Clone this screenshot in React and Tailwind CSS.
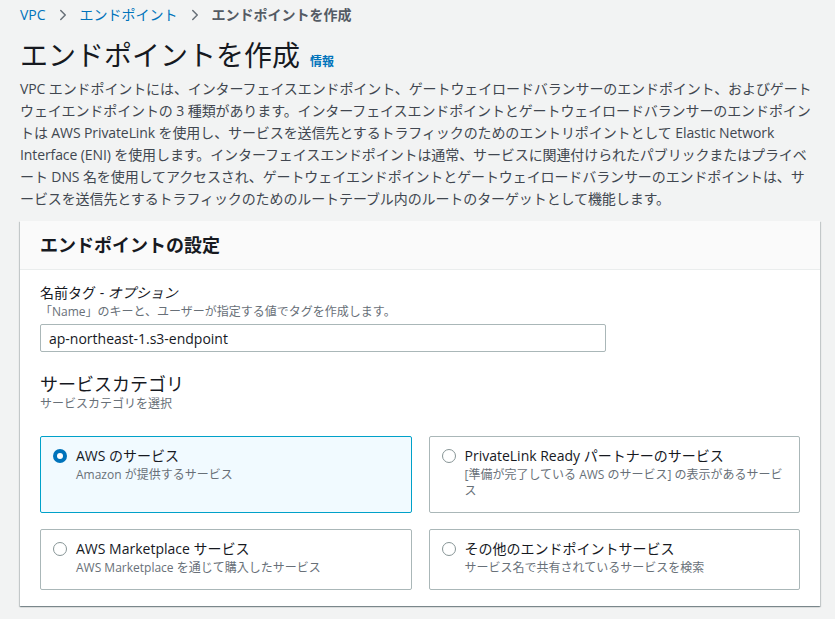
import { ChevronRight } from "lucide-react";

const FONT = {
  fontFamily: '"Open Sans", "Noto Sans CJK JP", sans-serif',
};

const CATEGORIES = [
  { id: "aws", label: "AWS のサービス", desc: "Amazon が提供するサービス" },
  {
    id: "partner",
    label: "PrivateLink Ready パートナーのサービス",
    desc: "[準備が完了している AWS のサービス] の表示があるサービス",
  },
  { id: "marketplace", label: "AWS Marketplace サービス", desc: "AWS Marketplace を通じて購入したサービス" },
  { id: "other", label: "その他のエンドポイントサービス", desc: "サービス名で共有されているサービスを検索" },
];

// intro copy, split where the console wraps it
const INTRO = [
  "VPC エンドポイントには、インターフェイスエンドポイント、ゲートウェイロードバランサーのエンドポイント、およびゲート",
  "ウェイエンドポイントの 3 種類があります。インターフェイスエンドポイントとゲートウェイロードバランサーのエンドポイン",
  "トは AWS PrivateLink を使用し、サービスを送信先とするトラフィックのためのエントリポイントとして Elastic Network",
  "Interface (ENI) を使用します。インターフェイスエンドポイントは通常、サービスに関連付けられたパブリックまたはプライベ",
  "ート DNS 名を使用してアクセスされ、ゲートウェイエンドポイントとゲートウェイロードバランサーのエンドポイントは、サ",
  "ービスを送信先とするトラフィックのためのルートテーブル内のルートのターゲットとして機能します。",
];

function Radio({ checked }) {
  return checked ? (
    <span className="mt-[4px] flex h-[14px] w-[14px] shrink-0 items-center justify-center rounded-full bg-[#0073bb]">
      <span className="h-[6px] w-[6px] rounded-full bg-white" />
    </span>
  ) : (
    <span className="mt-[4px] h-[14px] w-[14px] shrink-0 rounded-full border border-[#879596] bg-white" />
  );
}

function Tile({ item, checked }) {
  return (
    <div
      className={`flex gap-[9px] rounded-[2px] border pl-[12px] pr-3 pt-2 pb-[13px] ${
        checked ? "border-[#00a1c9] bg-[#f1faff]" : "border-[#aab7b8] bg-white"
      }`}
    >
      <Radio checked={checked} />
      <div className="min-w-0">
        <div className="text-[14px] leading-[22px] text-[#16191f]">{item.label}</div>
        <div className="text-[12px] leading-[16px] text-[#687078]">{item.desc}</div>
      </div>
    </div>
  );
}

export default function App() {
  return (
    <div className="min-h-[619px] bg-[#f2f3f3] pl-5 pr-[15px] pt-1" style={FONT}>
      {/* breadcrumbs */}
      <nav className="flex h-[22px] items-center text-[14px] leading-[22px]">
        <span className="text-[#0073bb]">VPC</span>
        <ChevronRight size={18} strokeWidth={2} className="mx-[8px] text-[#687078]" />
        <span className="text-[#0073bb]">エンドポイント</span>
        <ChevronRight size={18} strokeWidth={2} className="mx-[8px] text-[#687078]" />
        <span className="font-bold text-[#545b64]">エンドポイントを作成</span>
      </nav>

      {/* page header */}
      <div className="mt-[11px] flex items-baseline gap-[10px]">
        <h1 className="text-[28px] leading-[36px] text-[#16191f]">エンドポイントを作成</h1>
        <span className="text-[12px] font-bold text-[#0073bb]">情報</span>
      </div>
      <p className="mt-[5px] text-[14px] leading-[22px] tracking-[-0.1px] text-[#414750]">
        {INTRO.map((line, i) => (
          <span key={i}>
            {line}
            {i < INTRO.length - 1 && <br />}
          </span>
        ))}
      </p>

      {/* settings container */}
      <section className="mt-[11px] bg-white shadow-[0_1px_1px_0_rgba(0,28,36,0.3),1px_1px_1px_0_rgba(0,28,36,0.15),-1px_1px_1px_0_rgba(0,28,36,0.15)]">
        <header className="border-b border-[#eaeded] bg-[#fafafa] px-5 py-3">
          <h2 className="text-[18px] font-bold leading-[24px] text-[#16191f]">エンドポイントの設定</h2>
        </header>

        <div className="px-5 pt-[12px] pb-4">
          <label className="block text-[14px] leading-[22px] text-[#16191f]">
            名前タグ - <i>オプション</i>
          </label>
          <div className="text-[12px] leading-[16px] text-[#687078]">
            「Name」のキーと、ユーザーが指定する値でタグを作成します。
          </div>
          <div className="mt-1 flex h-[28px] w-[566px] items-center rounded-[2px] border border-[#aab7b8] bg-white px-2 text-[14px] text-[#16191f]">
            ap-northeast-1.s3-endpoint
          </div>

          <h3 className="mt-[20px] text-[18px] leading-[24px] text-[#16191f]">サービスカテゴリ</h3>
          <div className="text-[12px] leading-[16px] text-[#687078]">サービスカテゴリを選択</div>

          <div className="mt-6 grid grid-cols-2 gap-x-[17px] gap-y-4">
            {CATEGORIES.map((c) => (
              <Tile key={c.id} item={c} checked={c.id === "aws"} />
            ))}
          </div>
        </div>
      </section>
    </div>
  );
}
